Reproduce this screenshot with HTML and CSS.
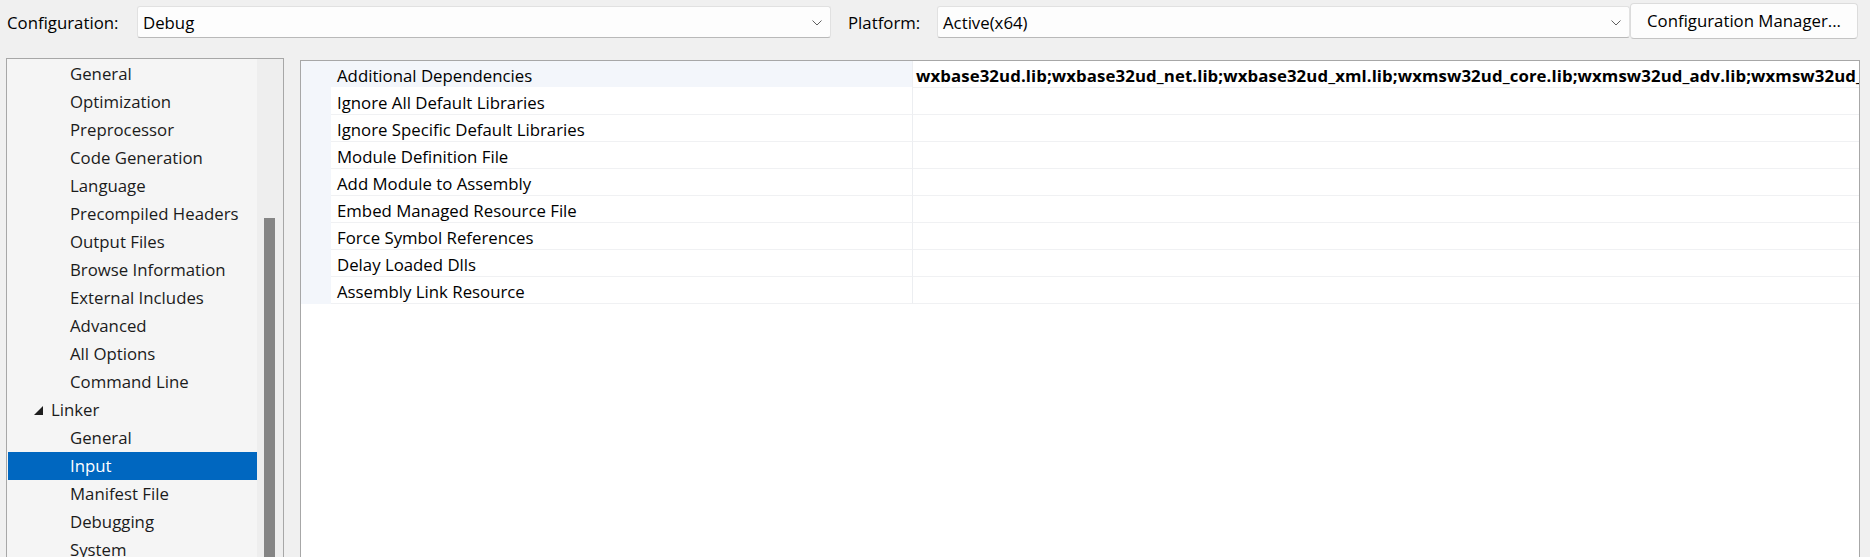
FILE: index.html
```html
<!DOCTYPE html>
<html>
<head>
<meta charset="utf-8">
<link rel="stylesheet" href="styles.css">
</head>
<body>
<div class="topbar">
  <span class="label label-config">Configuration:</span>
  <div class="combo combo-config">
    <span class="combo-text">Debug</span>
    <svg class="chev" width="10" height="6" viewBox="0 0 10 6"><path d="M0.5 0.5 L5 5 L9.5 0.5" fill="none" stroke="#5f5f5f" stroke-width="1"/></svg>
  </div>
  <span class="label label-platform">Platform:</span>
  <div class="combo combo-platform">
    <span class="combo-text">Active(x64)</span>
    <svg class="chev" width="10" height="6" viewBox="0 0 10 6"><path d="M0.5 0.5 L5 5 L9.5 0.5" fill="none" stroke="#5f5f5f" stroke-width="1"/></svg>
  </div>
  <div class="button">Configuration Manager...</div>
</div>

<div class="main">
  <div class="tree-panel">
    <ul class="tree">
      <li class="item child">General</li>
      <li class="item child">Optimization</li>
      <li class="item child">Preprocessor</li>
      <li class="item child">Code Generation</li>
      <li class="item child">Language</li>
      <li class="item child">Precompiled Headers</li>
      <li class="item child">Output Files</li>
      <li class="item child">Browse Information</li>
      <li class="item child">External Includes</li>
      <li class="item child">Advanced</li>
      <li class="item child">All Options</li>
      <li class="item child">Command Line</li>
      <li class="item parent"><svg class="tri" width="9" height="9" viewBox="0 0 9 9"><polygon points="9,0 9,9 0,9" fill="#1e1e1e"/></svg>Linker</li>
      <li class="item child">General</li>
      <li class="item child selected">Input</li>
      <li class="item child">Manifest File</li>
      <li class="item child">Debugging</li>
      <li class="item child">System</li>
    </ul>
    <div class="vscroll"><div class="thumb"></div></div>
  </div>

  <div class="grid-panel">
    <div class="grid">
      <div class="row first">
        <div class="gutter"></div>
        <div class="name">Additional Dependencies</div>
        <div class="value">wxbase32ud.lib;wxbase32ud_net.lib;wxbase32ud_xml.lib;wxmsw32ud_core.lib;wxmsw32ud_adv.lib;wxmsw32ud_aui.lib;wxmsw32ud_html.lib;wxmsw32ud_media.lib;%(AdditionalDependencies)</div>
      </div>
      <div class="row"><div class="gutter"></div><div class="name">Ignore All Default Libraries</div><div class="value"></div></div>
      <div class="row"><div class="gutter"></div><div class="name">Ignore Specific Default Libraries</div><div class="value"></div></div>
      <div class="row"><div class="gutter"></div><div class="name">Module Definition File</div><div class="value"></div></div>
      <div class="row"><div class="gutter"></div><div class="name">Add Module to Assembly</div><div class="value"></div></div>
      <div class="row"><div class="gutter"></div><div class="name">Embed Managed Resource File</div><div class="value"></div></div>
      <div class="row"><div class="gutter"></div><div class="name">Force Symbol References</div><div class="value"></div></div>
      <div class="row"><div class="gutter"></div><div class="name">Delay Loaded Dlls</div><div class="value"></div></div>
      <div class="row"><div class="gutter"></div><div class="name">Assembly Link Resource</div><div class="value"></div></div>
    </div>
  </div>
</div>
</body>
</html>
```

FILE: styles.css
```css
* { box-sizing: border-box; }

html, body {
  margin: 0;
  padding: 0;
  height: 100%;
  overflow: hidden;
}

body {
  background: #f0f0f0;
  font-family: "Open Sans", "Noto Sans", sans-serif;
  font-size: 16.8px;
  color: #000;
}

.topbar {
  display: flex;
  align-items: flex-start;
  padding: 3px 0 0 7px;
  height: 39px;
}

.label {
  display: block;
  height: 36px;
  line-height: 28px;
  padding-top: 6px;
  color: #000;
}

.label-config { width: 130px; }
.label-platform { width: 89px; margin-left: 17px; }

.combo {
  margin-top: 3px;
  height: 32px;
  display: flex;
  align-items: center;
  justify-content: space-between;
  background: #fdfdfd;
  border: 1px solid #e1e1e1;
  border-bottom-color: #b9b9b9;
  border-radius: 3px;
  padding: 0 8px 0 5px;
}

.combo-config { width: 694px; }
.combo-platform { width: 693px; }

.combo-text {
  line-height: 28px;
  padding-top: 2px;
}

.chev { display: block; margin-top: 1px; }

.button {
  height: 36px;
  width: 228px;
  background: #fdfdfd;
  border: 1px solid #dcdcdc;
  border-bottom-color: #c4c4c4;
  border-radius: 4px;
  text-align: center;
  line-height: 34px;
  color: #000;
}

.main {
  display: flex;
  align-items: flex-start;
  gap: 16px;
  padding: 0 0 0 6px;
  margin-top: 19px;
}

.tree-panel {
  width: 278px;
  height: 520px;
  flex: none;
  display: flex;
  border: 1px solid #a7a7a7;
  background: #f5f5f5;
}

.tree {
  list-style: none;
  margin: 0;
  padding: 1px 0 0 1px;
  width: 250px;
  flex: none;
  overflow: hidden;
}

.item {
  height: 28px;
  line-height: 28px;
  color: #1b1b1b;
  white-space: nowrap;
  display: flex;
  align-items: center;
}

.item.child { padding-left: 62px; }
.item.parent { padding-left: 26px; }

.tri { display: block; margin-right: 8px; margin-top: 1px; }

.item.selected {
  background: #0067c0;
  color: #fff;
}

.vscroll {
  flex: 1;
  background: #eeeeee;
  position: relative;
}

.thumb {
  position: absolute;
  left: 7px;
  width: 11px;
  top: 159px;
  bottom: 0;
  background: #858585;
}

.grid-panel {
  margin-top: 2px;
  width: 1560px;
  height: 520px;
  flex: none;
  border: 1px solid #a7a7a7;
  background: #fff;
  overflow: hidden;
}

.row {
  display: flex;
  height: 27px;
}

.gutter {
  width: 30px;
  flex: none;
  background: #f3f6fb;
}

.name {
  width: 581px;
  flex: none;
  padding: 2px 0 0 6px;
  line-height: 25px;
  border-bottom: 1px solid #f0f1f3;
  white-space: nowrap;
}

.row.first .name { background: #f3f6fb; border-bottom-color: #ffffff; }

.value {
  flex: 1;
  min-width: 0;
  border-left: 1px solid #eceef1;
  border-bottom: 1px solid #f0f1f3;
  padding: 2px 0 0 3px;
  line-height: 25px;
  font-weight: 700;
  white-space: nowrap;
  overflow: hidden;
  letter-spacing: 0.1px;
}
```
